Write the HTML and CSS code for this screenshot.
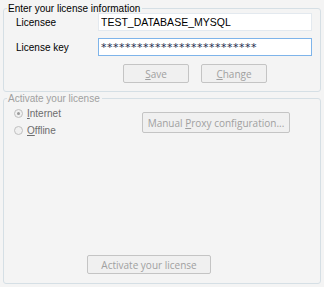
FILE: index.html
```html
<!DOCTYPE html>
<html lang="en">
  <head>
    <meta charset="UTF-8" />
    <title>License</title>
    <link rel="stylesheet" href="styles.css">
  </head>
  <body>
    <fieldset class="group">
      <legend>Enter your license information</legend>
      <div class="field-row">
        <label for="licensee">Licensee</label>
        <input type="text" id="licensee" value="TEST_DATABASE_MYSQL" />
      </div>
      <div class="field-row">
        <label for="key">License key</label>
        <input type="text" id="key" class="focused secret" value="**************************" />
      </div>
      <div class="buttons">
        <button type="button" disabled><u>S</u>ave</button>
        <button type="button" disabled><u>C</u>hange</button>
      </div>
    </fieldset>

    <fieldset class="group activate" disabled>
      <legend>Activate your license</legend>
      <div class="mode-row">
        <div class="radios">
          <label class="radio"><input type="radio" name="mode" checked disabled /><span><u>I</u>nternet</span></label>
          <label class="radio"><input type="radio" name="mode" disabled /><span><u>O</u>ffline</span></label>
        </div>
        <button type="button" class="proxy" disabled>Manual <u>P</u>roxy configuration...</button>
      </div>
      <div class="activate-bar">
        <button type="button" class="activate-btn" disabled>Activate your license</button>
      </div>
    </fieldset>
  </body>
</html>
```

FILE: styles.css
```css
body {
  margin: 0;
  padding: 2px 3px 0 3px;
  background-color: #f4f4f4;
  font-family: "Liberation Sans", Arial, sans-serif;
  font-size: 10px;
  color: #000;
  width: 318px;
}
.group {
  margin: 0;
  padding: 0;
  border: 1px solid #d5dfe5;
  border-radius: 3px;
  box-sizing: border-box;
  width: 318px;
}
.group legend {
  padding: 0 2px 0 1px;
  margin-left: 3px;
  line-height: 13px;
  font-size: 10px;
}
.field-row {
  display: flex;
  align-items: center;
  height: 18px;
  margin-top: -2px;
}
.field-row + .field-row {
  margin-top: 7px;
}
.field-row label {
  width: 82px;
  padding-left: 12px;
  font-size: 10px;
}
.field-row input {
  width: 214px;
  height: 18px;
  box-sizing: border-box;
  border: 1px solid #e3e9ef;
  background: #fff;
  font-family: inherit;
  font-size: 10.5px;
  padding: 0 2px;
  margin: 0;
  outline: none;
  color: #000;
}
.field-row input.focused {
  border-color: #7eb4ea;
}
.field-row input.secret {
  font-family: "DejaVu Sans", sans-serif;
  font-size: 11px;
  letter-spacing: 0.5px;
  color: #1a2a4a;
}
button {
  font-family: "Open Sans", "Liberation Sans", sans-serif;
  font-size: 10px;
  background: #f0f0f0;
  border: 1px solid #c4c4c4;
  border-radius: 2px;
  color: #a0a0a0;
  padding: 0;
  height: 19px;
  box-sizing: border-box;
}
.buttons {
  display: flex;
  gap: 12px;
  margin: 8px 0 8px 119px;
}
.buttons button {
  width: 66px;
}
.activate {
  margin-top: 0;
  height: 192px;
  display: flex;
  flex-direction: column;
}
.activate legend {
  color: #a0a0a0;
}
.mode-row {
  display: flex;
  align-items: flex-start;
}
.radios {
  width: 128px;
  padding-left: 10px;
}
.radio {
  display: flex;
  align-items: center;
  gap: 4px;
  color: #6d6d6d;
  font-size: 10px;
  height: 16px;
  margin-bottom: 1px;
}
.radio input {
  appearance: none;
  width: 9px;
  height: 9px;
  margin: 0;
  border: 1px solid #c0c0c0;
  border-radius: 50%;
  background: #f0f0f0;
  position: relative;
}
.radio input:checked::after {
  content: "";
  position: absolute;
  left: 2px;
  top: 2px;
  width: 3px;
  height: 3px;
  border-radius: 50%;
  background: #9a9a9a;
}
.proxy {
  width: 148px;
  height: 21px;
  margin-top: 7px;
}
.activate-bar {
  margin-top: auto;
  padding: 0 0 9px 83px;
}
.activate-btn {
  width: 124px;
}
```
